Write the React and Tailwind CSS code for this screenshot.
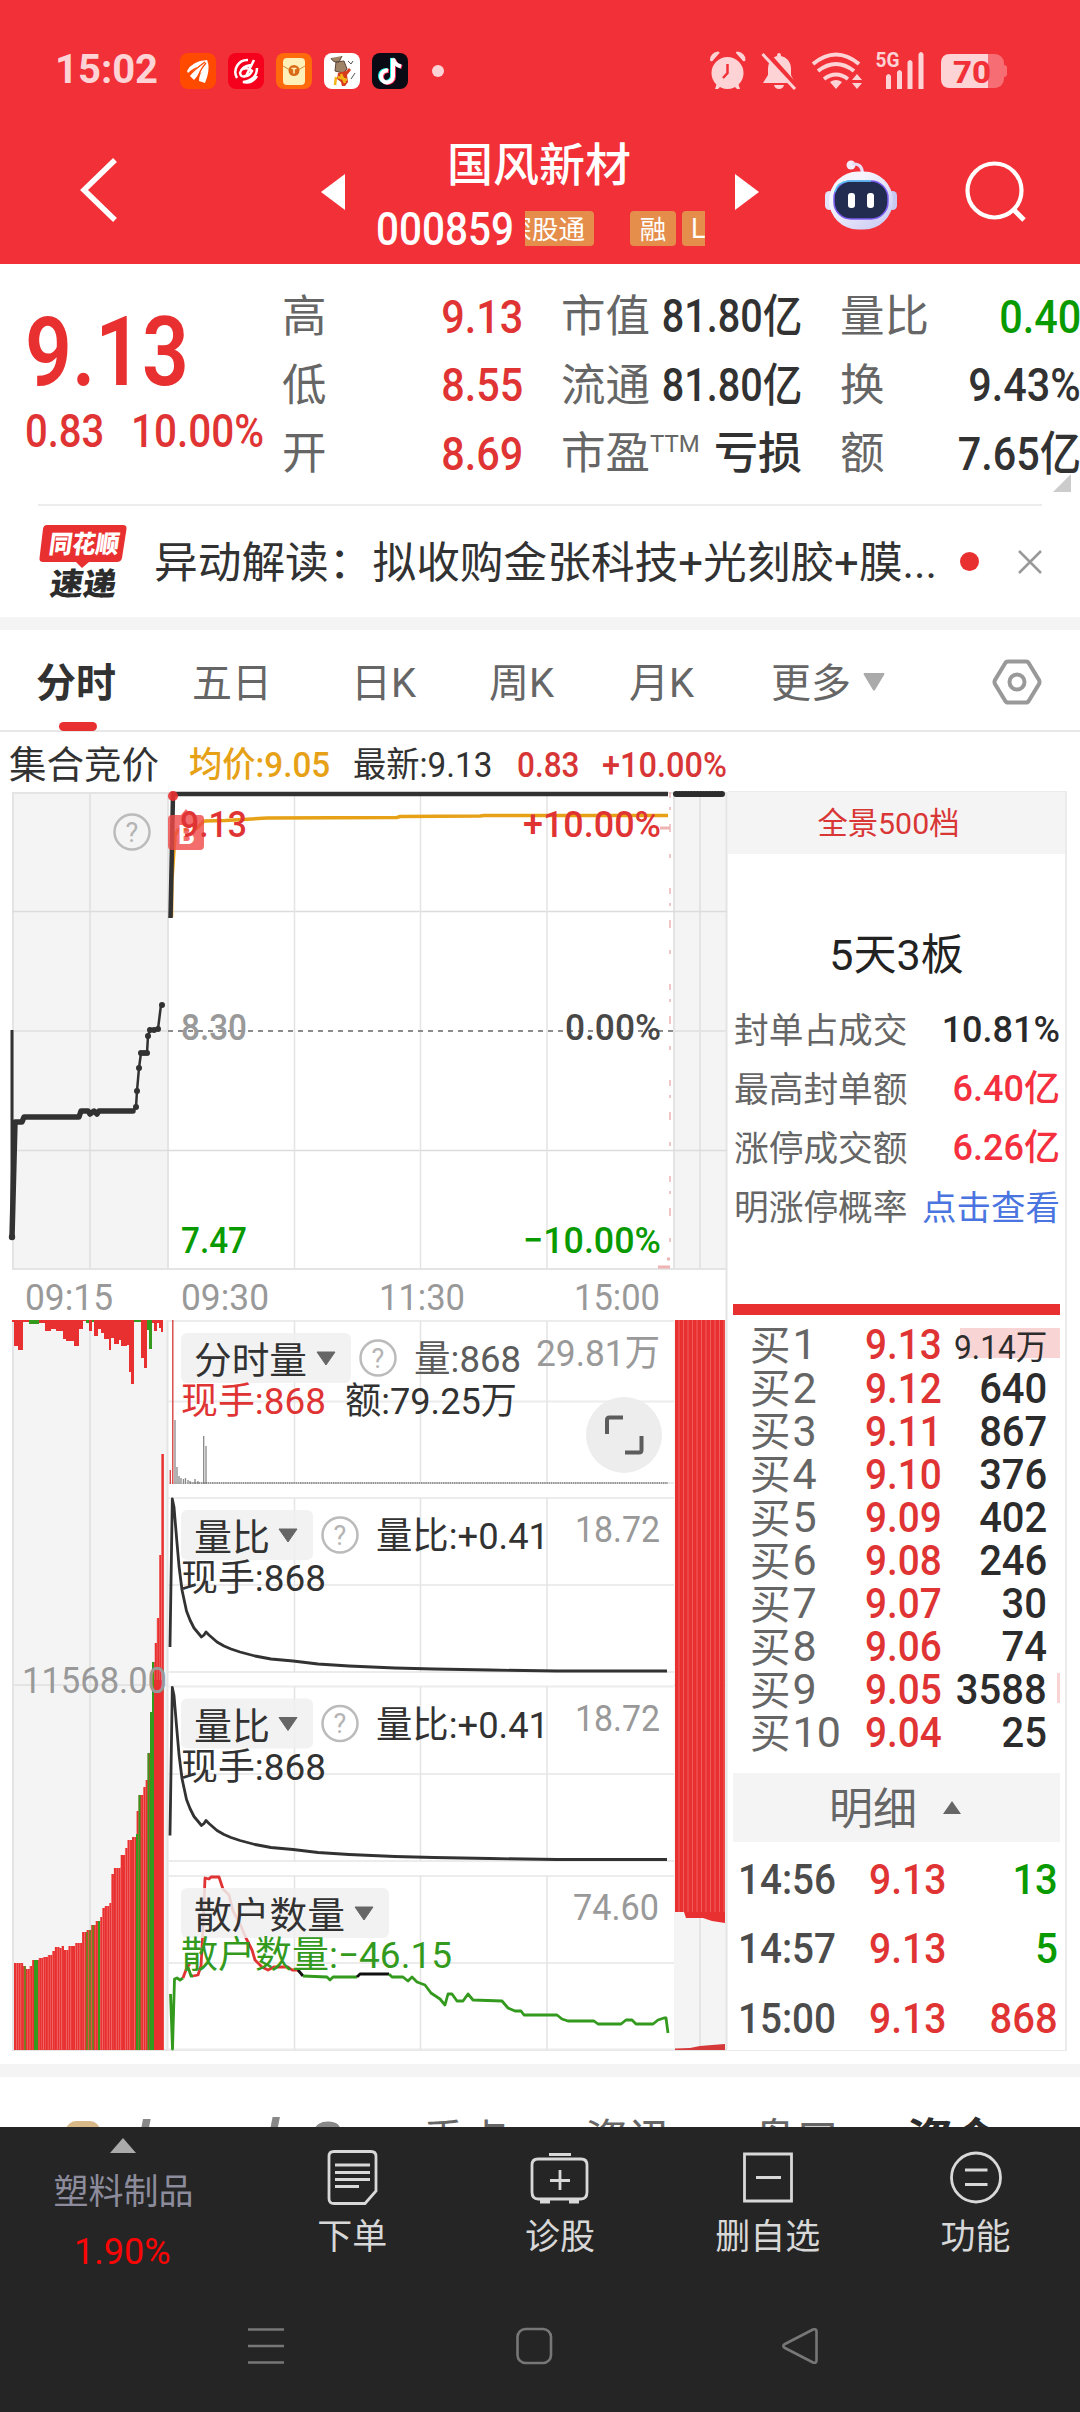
import React from "react";

const stats = [
  [
    { label: "高", value: "9.13", color: "text-[#e03434]" },
    { label: "低", value: "8.55", color: "text-[#e03434]" },
    { label: "开", value: "8.69", color: "text-[#e03434]" },
  ],
  [
    { label: "市值", value: "81.80亿", color: "text-[#323232]" },
    { label: "流通", value: "81.80亿", color: "text-[#323232]" },
    { label: "市盈", sup: "TTM", value: "亏损", color: "text-[#323232]" },
  ],
  [
    { label: "量比", value: "0.40", color: "text-[#089a00]" },
    { label: "换", value: "9.43%", color: "text-[#323232]" },
    { label: "额", value: "7.65亿", color: "text-[#323232]" },
  ],
];

const limitStats = [
  { label: "封单占成交", value: "10.81%", color: "text-[#2a2a2a]" },
  { label: "最高封单额", value: "6.40亿", color: "text-[#f5303e]" },
  { label: "涨停成交额", value: "6.26亿", color: "text-[#f5303e]" },
  { label: "明涨停概率", value: "点击查看", color: "text-[#4a74e0]", link: true },
];

const bids = [
  { price: "9.13", qty: "9.14万", bar: 100 },
  { price: "9.12", qty: "640" },
  { price: "9.11", qty: "867" },
  { price: "9.10", qty: "376" },
  { price: "9.09", qty: "402" },
  { price: "9.08", qty: "246" },
  { price: "9.07", qty: "30" },
  { price: "9.06", qty: "74" },
  { price: "9.05", qty: "3588", bar: 3 },
  { price: "9.04", qty: "25" },
];

const ticks = [
  { time: "14:56", price: "9.13", qty: "13", color: "text-[#089a00]" },
  { time: "14:57", price: "9.13", qty: "5", color: "text-[#089a00]" },
  { time: "15:00", price: "9.13", qty: "868", color: "text-[#e03434]" },
];

// [x from, x to, length, green]
const hanging = [
  [12, 14, 2], [14, 18, 26], [18, 23, 30], [23, 29, 2], [29, 39, 4, true], [39, 45, 3],
  [45, 51, 11], [51, 56, 9], [56, 63, 11], [63, 66, 19], [66, 74, 21], [74, 79, 26],
  [79, 83, 9], [83, 86, 1], [86, 89, 3, true], [89, 92, 11], [92, 94, 2, true], [94, 98, 16],
  [98, 101, 9], [101, 104, 13], [104, 109, 19], [109, 111, 30], [111, 114, 18], [114, 119, 24],
  [119, 121, 20], [121, 127, 26], [127, 129, 25], [129, 131, 52], [131, 134, 64], [134, 141, 2, true],
  [141, 144, 38], [144, 147, 48], [147, 149, 10, true], [149, 152, 29, true], [152, 154, 3],
  [154, 157, 11], [157, 159, 3], [159, 161, 8], [161, 163, 12],
];

// top edge of the call auction volume: [x, y]
const auctionTop = [
  [14, 1963], [23, 1966], [25, 1969], [29, 1966], [32, 1960], [39, 1958], [43, 1957], [48, 1955],
  [52, 1951], [54, 1947], [58, 1948], [62, 1946], [64, 1950], [68, 1946], [75, 1943], [82, 1932],
  [87, 1930], [91, 1925], [95, 1921], [99, 1917], [101, 1908], [105, 1906], [109, 1903], [111, 1874],
  [114, 1868], [119, 1867], [121, 1855], [124, 1848], [128, 1840], [132, 1837], [135, 1834],
  [137, 1811], [139, 1795], [142, 1787], [145, 1780], [148, 1753], [150, 1712], [152, 1662],
  [154, 1643], [156.5, 1618], [159, 1555], [161, 1454], [163, 1454],
];

const greenBars = [24, 34, 36, 86, 89, 92, 98, 136, 138.5, 147.5, 150, 152];

const topAt = (x) => {
  let y = auctionTop[0][1];
  auctionTop.forEach(([px, py]) => {
    if (px <= x + 0.5) y = py;
  });
  return y;
};

const ratioCurve =
  "170,1647 172.3,1499 174,1507 177,1543 179,1566 182,1590 186.5,1611 190,1620 194,1628 201.5,1637 204,1635 206,1632 209,1635 217,1642 224,1646 231,1649 240,1652 255,1656 271,1659 293,1661 318,1664 349,1666 395,1668 434,1669 490,1670 557,1671 667,1671";

const Label = ({ x, y, w, size = 37, fill = "#323232", weight = 400, children }) => (
  <text
    x={x}
    y={y}
    textLength={w}
    lengthAdjust="spacingAndGlyphs"
    fontSize={size}
    fill={fill}
    fontWeight={weight}
  >
    {children}
  </text>
);

const Help = ({ x, y }) => (
  <g>
    <circle cx={x} cy={y} r="17.5" fill="none" stroke="#bbb" strokeWidth="2.5" />
    <text x={x} y={y + 9.5} textAnchor="middle" fontSize="27" fill="#b4b4b4">?</text>
  </g>
);

const Pill = ({ y, w, text, textWidth }) => (
  <g>
    <rect x="181" y={y} width={w} height="50" rx="6" fill="#f0f0f0" fillOpacity="0.85" />
    <Label x={194} y={y + 41} w={textWidth}>{text}</Label>
    <path d={`M${181 + w - 34} ${y + 19}h18l-9 13z`} fill="#666" stroke="#666" strokeLinejoin="round" />
  </g>
);

const Grid = ({ top, mid, bottom }) => (
  <g stroke="#e4e4e4" strokeWidth="1.5">
    <path d={`M168 ${top}H674M168 ${mid}H674M168 ${bottom}H674`} strokeWidth="2" stroke="#ececec" />
    <path d={`M294.5 ${top}V${bottom}M420.5 ${top}V${bottom}M547 ${top}V${bottom}`} />
  </g>
);

const Charts = () => (
  <svg
    className="block h-[1272px] w-[728px] shrink-0"
    viewBox="0 790 728 1272"
    fontFamily="Roboto, 'Noto Sans CJK SC', sans-serif"
  >
    {/* auction and after-hours columns */}
    <g fill="#f4f4f4">
      <path d="M12 792H169V1269H12zM673 792H727V1269H673z" />
      <path d="M12 1320H167V2050H12zM674 1320H727V2050H674z" />
    </g>
    <g stroke="#e4e4e4" strokeWidth="2" fill="none">
      <path d="M12 793H727M12 1269H727M12 1031H169M673 1031H727M12 1685H168M674 1685H727" />
      <path d="M13 792V1269M168 792V1269M90 792V1269M674 792V1269M700 792V1269M726.5 792V2050" />
      <path d="M13 1320V2050M167.5 1320V2050M90 1320V2050M700 1900V2050M12 2050H727" />
    </g>
    <path d="M12 911.5H727M12 1150.5H727" stroke="#dcdcdc" strokeWidth="1.5" />
    <path d="M294.5 792V1269M420.5 792V1269M547 792V1269" stroke="#e4e4e4" strokeWidth="1.5" />
    <path d="M168 1031H673" stroke="#8c8c8c" strokeWidth="2" strokeDasharray="5 5" />

    {/* price */}
    <path d="M670 792V1269" stroke="#eeb4b4" strokeWidth="1.5" strokeDasharray="6 9 3 14 8 22 4 30" />
    <path d="M660 828h10M658 1267h12M667 1259h3" stroke="#eeb4b4" strokeWidth="3" />
    <polyline
      points="171.5,917 172,880 174,850 175,835 178,830 190,829 197,828 204,821 225,820.5 267,818 397,817.5 400,816.5 480,816 484,815.5 668,815.5"
      fill="none" stroke="#e6a117" strokeWidth="3.5"
    />
    <polyline points="170.5,918 173,794 668,794" fill="none" stroke="#323232" strokeWidth="4.5" />
    <path d="M676 794H723" stroke="#2c2c2c" strokeWidth="6" strokeLinecap="round" strokeDasharray="1 2" />
    <path d="M12 1030V1237" stroke="#323232" strokeWidth="3" />
    <circle cx="12" cy="1237" r="3.2" fill="#323232" />
    <polyline
      points="12,1237 15,1122 22,1122 24,1117 79,1117 81,1111 88,1111 90,1114 94,1111 97,1114 99,1111 133,1111"
      fill="none" stroke="#323232" strokeWidth="5.5" strokeLinecap="round" strokeLinejoin="round"
    />
    <polyline
      points="133,1111 136,1107 137,1091 139,1068 141,1053 147,1053 148,1036 150,1030 158,1029 161,1005"
      fill="none" stroke="#323232" strokeWidth="2.5"
    />
    {[[136, 1107], [137, 1091], [139, 1068], [141, 1053], [144, 1053], [147, 1053], [148, 1036], [150, 1030], [154, 1030], [158, 1029], [162, 1005]].map(([x, y]) => (
      <circle key={`${x}-${y}`} cx={x} cy={y} r="3" fill="#323232" />
    ))}
    <circle cx="173" cy="796" r="5" fill="#e93030" fillOpacity="0.9" />
    <path d="M186 809l5 6h9q4 0 4 4v27q0 4-4 4h-28q-4 0-4-4v-27q0-4 4-4h9z" fill="#f04848" fillOpacity="0.8" />
    <Label x={178} y={844} w={17} size={26} fill="#fff" weight={700}>B</Label>
    <Help x={132} y={832} />

    <g>
      <Label x={180} y={837} w={67} fill="#e03434" weight={500}>9.13</Label>
      <Label x={523} y={837} w={138} fill="#e03434" weight={500}>+10.00%</Label>
      <Label x={181} y={1040} w={66} fill="#999" weight={500}>8.30</Label>
      <Label x={565} y={1040} w={96} fill="#484848" weight={500}>0.00%</Label>
      <Label x={181} y={1253} w={66} fill="#089a00" weight={500}>7.47</Label>
      <Label x={523} y={1253} w={138} fill="#089a00" weight={500}>−10.00%</Label>
      <Label x={25} y={1310} w={88} fill="#999">09:15</Label>
      <Label x={181} y={1310} w={88} fill="#999">09:30</Label>
      <Label x={379} y={1310} w={86} fill="#999">11:30</Label>
      <Label x={574} y={1310} w={86} fill="#999">15:00</Label>
    </g>

    {/* auction volume */}
    {hanging.map(([from, to, len, green]) => (
      <rect key={from} x={from} y="1320" width={to - from} height={len} fill={green ? "#339a1e" : "#e93030"} />
    ))}
    {Array.from({ length: 66 }, (_, i) => 14 + i * 2.27).map((x) => (
      <rect key={x} x={x} y={topAt(x)} width="2.3" height={2050 - topAt(x)} fill="#e93030" />
    ))}
    {Array.from({ length: 33 }, (_, i) => 16 + i * 4.54).map((x) => (
      <rect key={x} x={x} y={topAt(x)} width="0.7" height={2050 - topAt(x)} fill="#f26a6a" />
    ))}
    {greenBars.map((x) => (
      <rect key={x} x={x} y={topAt(x)} width="2" height={2050 - topAt(x)} fill={x < 30 || (x > 80 && x < 95) ? "#7a7a22" : "#339a1e"} />
    ))}
    <rect x="154" y="1680" width="9" height="370" fill="#e93030" />
    <Label x={22} y={1693} w={145} fill="#999">11568.00</Label>

    {/* after-hours volume */}
    <path d="M675 1320H725V1923L712 1921L703 1918H686L684 1912H675z" fill="#e93030" />
    {Array.from({ length: 11 }, (_, i) => 679 + i * 4.5).map((x) => (
      <path key={x} d={`M${x} 1320V1912`} stroke="#f26a6a" strokeWidth="0.8" />
    ))}
    <path d="M675 2050V2048.500L690 2048L700 2046L712 2045L725 2044V2050z" fill="#d43838" />

    <Grid top={1321} mid={1401.5} bottom={1483} />
    <Grid top={1498} mid={1585} bottom={1672} />
    <Grid top={1686.5} mid={1774} bottom={1861} />
    <Grid top={1876} mid={1963} bottom={2049.5} />

    {/* minute volume */}
    <path d="M170.300 1470V1484M172.800 1320V1484" stroke="#d94444" strokeWidth="1.4" />
    <path d="M175 1420V1484M177 1467V1484M179 1476V1484M181 1478V1484M183.500 1479V1484M185.500 1478V1484M188 1480V1484M190 1481V1484M195 1479V1484M198 1481V1484M203.700 1436V1484M206 1446V1484" stroke="#888" strokeWidth="1.3" />
    <path d="M190 1483H668" stroke="#777" strokeWidth="1.6" strokeDasharray="1.500 0.700" />
    <Pill y={1333} w={170} text="分时量" textWidth={113} />
    <Help x={378} y={1358} />
    <Label x={414} y={1372} w={107} fill="#5c5c5c">量:868</Label>
    <Label x={536} y={1366} w={124} fill="#999">29.81万</Label>
    <Label x={181} y={1414} w={145} fill="#e03434">现手:868</Label>
    <Label x={345} y={1414} w={172}>额:79.25万</Label>
    <circle cx="624" cy="1435" r="38" fill="#ededed" />
    <path d="M607 1434V1420q0-2.500 2.500-2.500H623M641.500 1436V1450q0 2.500-2.500 2.500H625" fill="none" stroke="#5c5c5c" strokeWidth="4" />

    {/* volume ratio, shown twice */}
    {[0, 188.5].map((dy) => (
      <g key={dy} transform={`translate(0 ${dy})`}>
        <Pill y={1510} w={132} text="量比" textWidth={76} />
        <Help x={340} y={1535} />
        <polyline points={ratioCurve} fill="none" stroke="#323232" strokeWidth="2.8" strokeLinejoin="round" />
        <Label x={376} y={1549} w={173}>量比:+0.41</Label>
        <Label x={575} y={1542} w={85} fill="#999">18.72</Label>
        <Label x={181} y={1591} w={145}>现手:868</Label>
      </g>
    ))}

    {/* retail holders */}
    <g fill="none" strokeWidth="2.8" strokeLinejoin="round">
      <polyline points="170.5,1994 172.5,2049 174.500,1979 177,1978 180,1980 183,1978" stroke="#339a1e" />
      <polyline points="183,1978 187,1967 190,1964" stroke="#e03434" />
      <polyline points="188,1967 191,1976 193,1976" stroke="#339a1e" />
      <polyline
        points="193,1976 198,1975 201,1966 203,1930 205,1878 209,1879 211,1877 219,1877 223,1889 229,1895 233,1911 240,1924 246,1938 252,1950 255,1960 262,1967 268,1970 274,1967 288,1967 292,1970 298,1970"
        stroke="#e03434"
      />
      <polyline points="298,1970 303,1976" stroke="#111" />
      <polyline points="303,1976 327,1977 330,1980 333,1977 357,1977" stroke="#339a1e" />
      <polyline points="357,1977 360,1974 389,1974" stroke="#111" />
      <polyline
        points="389,1974 392,1977 403,1977 408,1981 412,1977 417,1982 425,1985 431,1993 440,1999 445,2005 448,1994 452,1994 457,2001 463,2001 468,1994 473,2000 502,2001 508,2008 515,2011 521,2011 524,2015 557,2015 562,2019 568,2021 594,2021 598,2024 621,2024 626,2020 632,2020 636,2024 653,2024 658,2020 664,2018 666,2018 668,2033"
        stroke="#339a1e"
      />
    </g>
    <Pill y={1888} w={208} text="散户数量" textWidth={151} />
    <Label x={573} y={1920} w={86} fill="#999">74.60</Label>
    <Label x={181} y={1968} w={271} fill="#339a1e">散户数量:−46.15</Label>
  </svg>
);

const StatusBar = () => (
  <div className="flex h-[142px] items-center pl-[55px] pr-[72px] text-[#fdd3d5]">
    <span className="-mt-[2px] w-[125px] text-[40px] font-bold leading-none">15:02</span>
    <div className="flex gap-3">
      <svg className="size-9" viewBox="0 0 36 36">
        <rect width="36" height="36" rx="8" fill="#ff4a00" />
        <path d="M7 18Q12 8 27 7Q21 10 18 14Q13 15 8 20zM10 23Q13 16 19 14Q21 9 27 7Q29 9 25 16Q19 20 14 27zM19 28Q19 21 24 16L28 9Q30 18 25 30z" fill="#fff" />
        <path d="M10 22Q14 17 25 9M17 27Q19 18 26 10" stroke="#ff4a00" strokeWidth="1.200" fill="none" />
      </svg>
      <svg className="size-9" viewBox="0 0 36 36">
        <rect width="36" height="36" rx="8" fill="#f5001d" />
        <path d="M20 7A12 12 0 0 0 9 25M29 15Q29 27 15 29Q24 31 29 23M23 12q-9 1-11 8 1 5 6 3l8-16M13 17q6-4 11 1-3 6-8 5" fill="none" stroke="#fff" strokeWidth="2.5" />
      </svg>
      <svg className="size-9" viewBox="0 0 36 36">
        <rect width="36" height="36" rx="8" fill="#ff6a0c" />
        <rect x="7" y="5" width="22" height="27" rx="4" fill="#ffefb8" />
        <path d="M7 13q5 4 11 4t11-4" fill="none" stroke="#d98a3a" />
        <circle cx="18" cy="17.500" r="5.500" fill="#d96a16" />
        <path d="M15.500 15.500h5M18 15.500v5" stroke="#ffefb8" strokeWidth="1.600" />
      </svg>
      <svg className="size-9" viewBox="0 0 36 36">
        <rect width="36" height="36" rx="8" fill="#fff" />
        <path d="M7 5q2 5 8 4l3-6M12 9l8-1 3 8-4 4-8-2z" fill="#a08468" stroke="#5b4536" />
        <path d="M14 20l8-2 3-3 2 2-4 5 1 7-3 4h-3l-1-4-4-3z" fill="#d83a1c" />
        <path d="M14 24l9 3M17 21l4 9M12 24l-1 8" stroke="#f2b417" strokeWidth="2.500" />
        <path d="M24 8l3 3 2-3M27 26l4-6" stroke="#555" fill="none" />
      </svg>
      <svg className="size-9" viewBox="0 0 36 36">
        <rect width="36" height="36" rx="8" fill="#0a0a14" />
        <g fill="none" strokeWidth="4">
          <path d="M15 17a6 6 0 1 0 5 6V5q1 6 8 8" stroke="#25f4ee" />
          <path d="M17 18a6 6 0 1 0 5 6V6q1 6 8 8" stroke="#fe2c55" />
          <path d="M16 17.500a6 6 0 1 0 5 6V5.500q1 6 8 8" stroke="#fff" />
        </g>
      </svg>
    </div>
    <span className="ml-6 size-3 rounded-full bg-[#fdd3d5]" />

    <svg className="ml-auto h-[40px] w-[300px] shrink-0" viewBox="708 51 300 40" fill="#fdd3d5">
      <circle cx="727.500" cy="73" r="16" />
      <path d="M710 60q0-7 8-8.500q2 0 1.500 1.500l-7 8q-2 1-2.500-1zM745.500 60q0-7-8-8.500q-2 0-1.500 1.500l7 8q2 1 2.500-1zM717 83l-2 6h3l4-4zM738 83l2 6h-3l-4-4z" />
      <path d="M727.500 64v9l-4.500 5" fill="none" stroke="#f23037" strokeWidth="2.500" />
      <path d="M779 53q2 0 2 3q9 2 10 12v7l4 8h-32l5-8v-7q1-10 9-12q0-3 2-3zM774 85h10q-1 4-5 4t-5-4z" />
      <path d="M765 52L797 88" stroke="#f23037" strokeWidth="6" />
      <path d="M762.500 54L795 89" stroke="#fdd3d5" strokeWidth="3" />
      <g fill="none" stroke="#fdd3d5" strokeWidth="4">
        <path d="M813 64q23-19 46 0M818 71q18-14 36 0M824 79q12-9 24 0" />
      </g>
      <path d="M836 89l-6-7q6-4 12 0zM852 80l5-6 5 6zM852 83l5 6 5-6z" />
      <text x="875.500" y="67" fontSize="21" fontWeight="700" textLength="24" lengthAdjust="spacingAndGlyphs" fontFamily="Roboto">5G</text>
      <path d="M886 76q2.500-4 5 0V89h-5zM897 72q2.500-4 5 0V89h-5zM907.500 62q2.500-4 5 0V89h-5zM918.500 54q2.500-4 5 0V89h-5z" />
      <rect x="941" y="54" width="63" height="34" rx="9" fillOpacity="0.38" />
      <path d="M1004 65q3 0 3 3v6q0 3-3 3z" fillOpacity="0.38" />
      <path d="M950 54H988V88H950q-9 0-9-9V63q0-9 9-9z" />
      <text x="953" y="82.500" fontSize="31" fontWeight="800" textLength="38" lengthAdjust="spacingAndGlyphs" fill="#f23037" fontFamily="Roboto">70</text>
    </svg>
  </div>
);

const TitleBar = () => (
  <div className="flex h-[122px] items-start text-white">
    <svg className="ml-[80px] mt-[15px] h-[66px] w-[40px]" viewBox="0 0 40 66" fill="none" stroke="#fff" strokeWidth="5.500">
      <path d="M35 3L4 33L35 63" />
    </svg>
    <svg className="ml-[201px] mt-[32px] h-9 w-6" viewBox="0 0 24 36" fill="#fff"><path d="M24 0V36L0 18z" /></svg>
    <div className="ml-[31px] flex w-[329px] flex-col">
      <div className="flex h-[46px] items-center justify-center pr-[3px] text-[46px] font-medium leading-none">国风新材</div>
      <div className="mt-[23px] flex h-[35px] items-center">
        <span className="w-[149px] origin-left scale-x-[0.88] whitespace-nowrap text-[46px] font-medium leading-none">000859</span>
        <span className="flex h-[35px] w-[69px] justify-end overflow-hidden rounded-r-[4px] bg-[#e58e4c] pr-[9px] text-[26.500px] leading-[37px]">
          <span className="shrink-0">深股通</span>
        </span>
        <span className="ml-9 h-[35px] w-[46px] rounded-[4px] bg-[#e58e4c] text-center text-[26.500px] leading-[37px]">融</span>
        <span className="ml-[6px] h-[35px] w-[23px] overflow-hidden rounded-l-[4px] bg-[#e58e4c] pl-[9px] text-[27px] leading-[36px]">L</span>
      </div>
    </div>
    <svg className="ml-[30px] mt-[32px] h-9 w-6" viewBox="0 0 24 36" fill="#fff"><path d="M0 0V36L24 18z" /></svg>
    <svg className="ml-[65px] mt-[16px] h-[72px] w-[74px]" viewBox="824 158 74 72">
      <defs>
        <linearGradient id="head" x1="0" y1="0" x2="1" y2="1">
          <stop offset="0.3" stopColor="#f6f4fd" />
          <stop offset="1" stopColor="#c4c6f2" />
        </linearGradient>
      </defs>
      <circle cx="851" cy="165" r="4.500" fill="#f3ecfb" />
      <path d="M852 164q10-1 10.500 9" fill="none" stroke="#e8dcf5" strokeWidth="3" />
      <rect x="825" y="191" width="9" height="19" rx="4.500" fill="#e4e2f8" />
      <rect x="888" y="191" width="9" height="19" rx="4.500" fill="#c9c8f2" />
      <rect x="829" y="171.500" width="64" height="58" rx="29" fill="url(#head)" />
      <rect x="834" y="181" width="54" height="38" rx="17" fill="#222c50" stroke="#7c5cf0" strokeWidth="1.500" />
      <path d="M835 192q2-10 14-11h22" fill="none" stroke="#58c8ee" strokeWidth="1.500" />
      <rect x="848" y="193" width="7" height="15" rx="3" fill="#fff" />
      <rect x="867" y="193" width="7" height="15" rx="3" fill="#fff" />
    </svg>
    <svg className="ml-[66px] mt-[18px] h-[64px] w-[64px]" viewBox="0 0 64 64" fill="none" stroke="#fff" strokeWidth="4.200">
      <circle cx="30.500" cy="30.500" r="27" />
      <path d="M49 49L60 60" strokeWidth="5" />
    </svg>
  </div>
);

const Quote = () => (
  <div className="flex h-[240px]">
    <div className="flex w-[282px] flex-col pl-[25px] text-[#e93030]">
      <span className="mt-[40px] origin-left scale-x-[0.855] text-[96px] font-semibold leading-none">9.13</span>
      <div className="mt-[8px] flex text-[46px] font-medium leading-none text-[#e03434]">
        <span className="w-[106px] origin-left scale-x-[0.87]">0.83</span>
        <span className="origin-left scale-x-[0.88]">10.00%</span>
      </div>
    </div>
    <div className="flex gap-[38px]">
      {stats.map((column, i) => (
        <div key={i} className="w-[241px] pt-[18px]">
          {column.map((item) => (
            <div key={item.label} className="flex h-[68.5px] items-center justify-between whitespace-nowrap leading-none">
              <span className="flex pt-[2px] text-[44.500px] text-[#666]">
                {item.label}
                {item.sup && <sup className="top-0 w-0 text-[24px] leading-none">{item.sup}</sup>}
              </span>
              <span className={`w-0 shrink-0 ${item.color}`}>
                <span
                  className={
                    item.sup
                      ? "float-right pt-[2px] text-[44px] font-medium"
                      : i === 1
                        ? "float-right origin-right scale-x-[0.86] text-[46px] font-medium"
                        : "float-right origin-right scale-x-[0.88] text-[47px] font-medium"
                  }
                >
                  {item.value}
                </span>
              </span>
            </div>
          ))}
        </div>
      ))}
    </div>
  </div>
);

const News = () => (
  <div className="relative mx-[38px] flex h-[113px] items-center border-t-2 border-[#ededed]">
    <svg className="absolute -top-8 left-[1015px] size-[18px]" viewBox="0 0 18 18"><path d="M18 0V18H0z" fill="#ccc" /></svg>
    <svg className="-mt-1 h-[76px] w-[90px] shrink-0" viewBox="0 0 90 76" fontFamily="'Noto Sans CJK SC', sans-serif" fontWeight="900">
      <path d="M9 3H85q4 0 3.500 4L84 36q-1 4-5 4H51l-7 6-6-6H5q-4 0-3.500-4L5 7q.500-4 4-4z" fill="#e93030" />
      <text transform="translate(10 31) skewX(-8)" fontSize="25" textLength="70" fill="#fff" lengthAdjust="spacingAndGlyphs">同花顺</text>
      <text transform="translate(11 73) skewX(-8)" fontSize="31" textLength="66" fill="#2c2c2c" lengthAdjust="spacingAndGlyphs">速递</text>
    </svg>
    <span className="ml-[26px] w-[780px] whitespace-nowrap pt-[5px] text-[43.7px] leading-none text-[#323232]">
      异动解读：拟收购金张科技+光刻胶+膜...
    </span>
    <span className="ml-[26px] size-[19px] shrink-0 rounded-full bg-[#e93030]" />
    <svg className="ml-auto size-6 shrink-0" viewBox="0 0 24 24" stroke="#999" strokeWidth="2.500"><path d="M1 1L23 23M23 1L1 23" /></svg>
  </div>
);

const Tabs = () => (
  <div className="flex h-[102px] items-center border-b-2 border-[#e8e8e8] pt-[4px] text-[40px] leading-none text-[#666]">
    <div className="relative ml-[36px] w-[156px] pt-[3px] font-bold text-[#323232]">
      分时
      <span className="absolute -bottom-[27px] left-[23px] h-[9px] w-[38px] rounded-full bg-[#e93030]" />
    </div>
    <span className="w-[159px] pt-[3px]">五日</span>
    <span className="w-[138px] pt-[3px]">日K</span>
    <span className="w-[140px] pt-[3px]">周K</span>
    <span className="w-[142px] pt-[3px]">月K</span>
    <span className="pt-[3px]">更多</span>
    <svg className="ml-[12px] h-[18px] w-[22px]" viewBox="0 0 22 18" fill="#aaa"><path d="M1 0H21q1 1 0 2L12 17q-1 1-2 0L1 2q-1-1 0-2z" /></svg>
    <svg className="ml-[106px] h-[48px] w-[52px]" viewBox="0 0 52 48" fill="none" stroke="#999" strokeWidth="4">
      <path d="M17 3.500H35q2 0 3 2L48 22q1 2 0 4L38 42.500q-1 2-3 2H17q-2 0-3-2L4 26q-1-2 0-4L14 5.500q1-2 3-2z" />
      <circle cx="26" cy="24" r="7.500" />
    </svg>
  </div>
);

const Legend = () => (
  <div className="flex h-[58px] items-center whitespace-nowrap pl-[9px] pt-[8px] text-[35px] leading-none text-[#323232]">
    <span className="w-[180px] pt-[2px] text-[37.500px]">集合竞价</span>
    <span className="w-[164px] origin-left scale-x-[0.95] font-medium text-[#e6a117]">均价:9.05</span>
    <span className="w-[164px] origin-left scale-x-[0.95]">最新:9.13</span>
    <span className="w-[85px] origin-left scale-x-[0.9] font-medium text-[#d83636]">0.83</span>
    <span className="origin-left scale-x-[0.93] font-medium text-[#d83636]">+10.00%</span>
  </div>
);

const OrderBook = () => (
  <div className="mt-[1px] h-[1260px] w-[339px] border-b border-r-2 border-t border-[#ebebeb]">
    <div className="flex h-[62px] items-center justify-center bg-[#f4f4f4] pr-[16px] pt-[2px] text-[30.300px] leading-none text-[#d93636]">全景500档</div>
    <div className="flex h-[202px] items-center justify-center text-[43px] leading-none text-[#222]">5天3板</div>
    <div className="-mt-[56px] ml-[6px] mr-[5px]">
      {limitStats.map((item) => (
        <div key={item.label} className="flex h-[59.100px] items-center justify-between whitespace-nowrap leading-none">
          <span className="pt-[3px] text-[34.700px] text-[#666]">{item.label}</span>
          <span className={`${item.link ? "pt-[3px] text-[34.500px]" : "text-[36px] font-medium"} ${item.color}`}>{item.value}</span>
        </div>
      ))}
    </div>
    <div className="mx-[5px] mt-[68px] h-[11px] bg-[#e93030]" />
    <div className="ml-[22px] mr-[5px] mt-[8px]">
      {bids.map((bid, i) => (
        <div key={bid.price} className="relative flex h-[43.100px] items-center whitespace-nowrap leading-none">
          {bid.bar && (
            <span className="absolute right-0 top-[5px] h-[30px] bg-[#f9d4d4]" style={{ width: `${bid.bar}px` }} />
          )}
          <span className="flex w-[115px] items-center gap-[2px] text-[#666]">
            <span className="pt-[3px] text-[40.500px]">买</span>
            <span className="text-[43px]">{i + 1}</span>
          </span>
          <span className="w-[77px] origin-left scale-x-[0.9] text-[43px] font-medium text-[#e03434]">{bid.price}</span>
          <span className="relative flex w-[105px] justify-end text-[#2c2c2c]">
            <span className={i === 0 ? "origin-right scale-x-[0.93] pt-[5px] text-[34px]" : "origin-right scale-x-[0.93] text-[43px] font-medium"}>
              {bid.qty}
            </span>
          </span>
        </div>
      ))}
    </div>
    <div className="mx-[5px] mt-[19px] flex h-[69px] items-center bg-[#f4f4f4] pl-[96px] text-[44px] leading-none text-[#666]">
      <span className="pt-[4px]">明细</span>
      <svg className="ml-[26px] h-[13px] w-[18px]" viewBox="0 0 18 13" fill="#666"><path d="M9 0L18 13H0z" /></svg>
    </div>
    <div className="ml-[10px] mr-[7px] mt-[3px]">
      {ticks.map((tick) => (
        <div key={tick.time} className="flex h-[69.300px] items-center text-[42px] font-medium leading-none">
          <span className="w-[131px] origin-left scale-x-[0.92] text-[#4c4c4c]">{tick.time}</span>
          <span className="origin-left scale-x-[0.93] text-[#e03434]">{tick.price}</span>
          <span className={`ml-auto origin-right scale-x-[0.95] ${tick.color}`}>{tick.qty}</span>
        </div>
      ))}
    </div>
  </div>
);

const SectionTabs = () => (
  <div className="flex h-[50px] overflow-hidden bg-white text-[43px] leading-none text-[#666]">
    <span className="ml-[66px] mt-[44px] h-[36px] w-[34px] rounded-[10px] bg-[#d9b988]" />
    <span className="ml-[34px] mt-[34px] w-[174px] font-['Liberation_Sans'] text-[60px] italic text-[#888] [-webkit-text-stroke:2px_#888]">Level</span>
    <span className="mt-[36px] w-[114px] font-['Liberation_Sans'] text-[60px] font-bold italic text-[#888]">2</span>
    <span className="mt-[43px] w-[163px]">重点</span>
    <span className="mt-[42px] w-[168px]">资讯</span>
    <span className="mt-[42px] w-[154px]">盘口</span>
    <span className="mt-[40px] text-[46px] font-bold text-[#2c2c2c]">资金</span>
  </div>
);

const Action = ({ label, children }) => (
  <div className="flex w-[208px] flex-col items-center pt-[21px] text-[35px] leading-none text-[#d8d8d8]">
    <svg className="h-[60px] w-[60px]" viewBox="0 0 60 60" fill="none" stroke="#d8d8d8" strokeWidth="2.800">{children}</svg>
    <span className="mt-[12px] pr-[1px]">{label}</span>
  </div>
);

const BottomBar = () => (
  <div className="h-[285px] bg-[#252525]">
    <div className="flex h-[175px]">
      <div className="flex w-[249px] flex-col items-center pr-[2px] pt-[11px] leading-none">
        <svg className="h-[15px] w-[26px]" viewBox="0 0 26 15" fill="#aaa"><path d="M13 0L26 15H0z" /></svg>
        <span className="mt-[22px] text-[35px] text-[#8c8c9c]">塑料制品</span>
        <span className="mt-[24px] pr-[2px] text-[36px] text-[#fa0505]">1.90%</span>
      </div>
      <Action label="下单">
        <path d="M11 3.500H48q5 0 5 5V43L42 55.500H11q-5 0-5-5V8.500q0-5 5-5z" />
        <path d="M12 17H47M12 24.500H47M12 31.500H47M12 38.500H36" />
      </Action>
      <Action label="诊股">
        <path d="M8 11H51q6 0 6 6V44q0 7-6 7H8q-6 0-6-7V17q0-6 6-6zM19 6.500H41M30 22V42M20 32.500H40" />
        <path d="M10 53.500H20M39 53.500H49" strokeWidth="4" />
      </Action>
      <Action label="删自选">
        <path d="M6.500 6H53.500V53H6.500zM18 29.500H43" />
      </Action>
      <Action label="功能">
        <circle cx="30" cy="29.500" r="24.500" />
        <path d="M19 22H41.500M19 36.500H41.500" />
      </Action>
    </div>
    <svg className="block h-[110px] w-[1080px]" viewBox="0 2302 1080 110" fill="none" stroke="#777" strokeWidth="2.600">
      <path d="M248 2329.500H284M248 2346H284M248 2362.500H284" />
      <rect x="517.500" y="2329" width="33.500" height="34" rx="8" />
      <path d="M813 2329.500L785 2344q-3.500 2 0 4L813 2362.500q3.500 1 3.500-2V2331.500q0-3-3.500-2z" />
    </svg>
  </div>
);

export default function App() {
  return (
    <div className="h-[2412px] w-[1080px] overflow-hidden bg-white font-['Roboto','Noto_Sans_CJK_SC',sans-serif]">
      <header className="h-[264px] bg-[#f23037]">
        <StatusBar />
        <TitleBar />
      </header>
      <Quote />
      <News />
      <div className="h-[13px] bg-[#f4f4f4]" />
      <Tabs />
      <Legend />
      <div className="flex h-[1274px]">
        <Charts />
        <OrderBook />
      </div>
      <div className="h-[13px] bg-[#f4f4f4]" />
      <SectionTabs />
      <BottomBar />
    </div>
  );
}
